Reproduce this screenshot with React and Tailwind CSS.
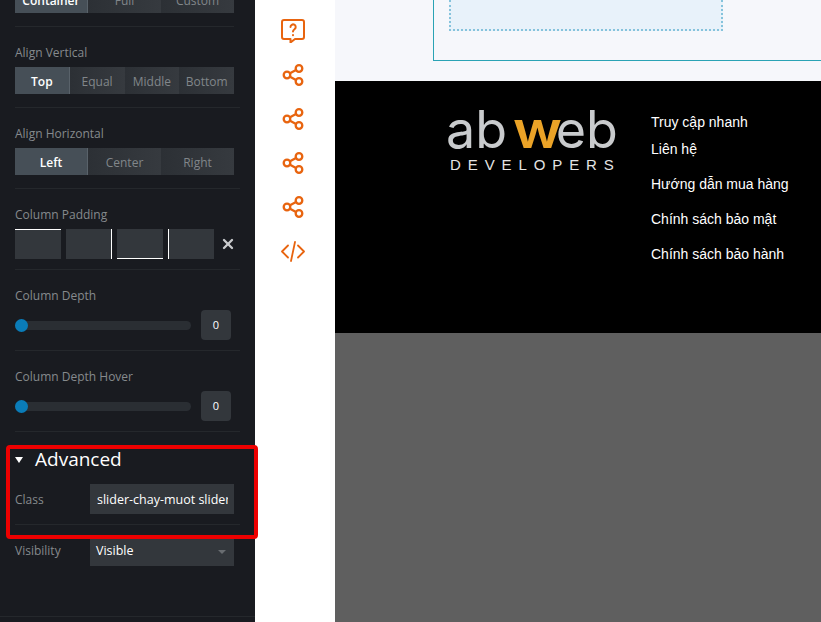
import { X } from "lucide-react";

function Segmented({ items, widths }) {
  return (
    <div className="flex h-[27px] w-[219px] text-[12px] text-[#81868a]">
      {items.map((item, i) => (
        <div
          key={item}
          className={
            widths +
            " flex items-center justify-center pt-[2px] " +
            (i === 0
              ? "bg-[#464f57] border-r border-[#59626a] font-semibold text-white"
              : "bg-gradient-to-r from-[#2c3035] to-[#363a3f]")
          }
        >
          {item}
        </div>
      ))}
    </div>
  );
}

function Section({ label, children }) {
  return (
    <div className="h-[81px] border-b border-[#25282c] pt-[18px]">
      <div className="h-[22px] text-[12px] leading-[16px] text-[#868a8d]">{label}</div>
      {children}
    </div>
  );
}

function DepthSlider() {
  return (
    <div className="flex items-center">
      <div className="h-[9px] w-[176px] rounded-full bg-[#2a2e33]">
        <div className="-mt-[2px] h-[13px] w-[13px] rounded-full bg-[#0a7cb8]" />
      </div>
      <div className="ml-[10px] flex h-[30px] w-[30px] items-center justify-center rounded-[4px] bg-[#33373c] text-[11px] font-medium text-white">
        0
      </div>
    </div>
  );
}

function HelpIcon() {
  return (
    <svg width="24" height="24" viewBox="0 0 24 24" fill="none" stroke="#e8640f" strokeWidth="2" strokeLinejoin="round" strokeLinecap="round">
      <path d="M3 1h18a2 2 0 0 1 2 2v15a2 2 0 0 1-2 2h-7l-4.500 3.500v-3.500H3a2 2 0 0 1-2-2V3a2 2 0 0 1 2-2z" />
      <path d="M9.500 8a2.600 2.600 0 1 1 4 2.200c-1 .7-1.500 1.200-1.500 2.300" />
      <path d="M12 16v.2" />
    </svg>
  );
}

function ShareIcon() {
  return (
    <svg width="24" height="24" viewBox="0 0 24 24" fill="none" stroke="#e8640f" strokeWidth="2.300">
      <circle cx="6" cy="12" r="3.300" />
      <circle cx="18" cy="5.500" r="3.300" />
      <circle cx="18" cy="18.500" r="3.300" />
      <path d="M9 10.300l6-3.200M9 13.700l6 3.200" />
    </svg>
  );
}

function CodeIcon() {
  return (
    <svg width="24" height="24" viewBox="0 0 24 24" fill="none" stroke="#e8640f" strokeWidth="1.800" strokeLinecap="round" strokeLinejoin="round">
      <path d="M7 6.500L1 12.500l6 6" />
      <path d="M17 6.500l6 6-6 6" />
      <path d="M14 3l-4 19" />
    </svg>
  );
}

const footerLinks = ["Liên hệ", "Hướng dẫn mua hàng", "Chính sách bảo mật", "Chính sách bảo hành"];

export default function App() {
  return (
    <div className="relative flex h-[622px] w-[821px] overflow-hidden bg-white font-['Open_Sans',sans-serif]">
      {/* left settings panel */}
      <div className="h-full w-[255px] shrink-0 bg-[#191b20] px-[15px]">
        <div className="-mt-[14px] h-[41px] w-[219px] border-b border-[#25282c]">
          <Segmented items={["Container", "Full", "Custom"]} widths="w-[73px]" />
        </div>
        <Section label="Align Vertical">
          <Segmented items={["Top", "Equal", "Middle", "Bottom"]} widths="w-[55px]" />
        </Section>
        <Section label="Align Horizontal">
          <Segmented items={["Left", "Center", "Right"]} widths="w-[73px]" />
        </Section>
        <Section label="Column Padding">
          <div className="flex h-[30px] items-center gap-[5px]">
            <div className="h-[30px] w-[46px] border-t border-white bg-[#33373c]" />
            <div className="h-[30px] w-[46px] border-r border-white bg-[#33373c]" />
            <div className="h-[30px] w-[46px] border-b border-white bg-[#33373c]" />
            <div className="h-[30px] w-[46px] border-l border-white bg-[#33373c]" />
            <X size={16} strokeWidth={3.5} className="ml-[1px] text-[#c9cbcd]" />
          </div>
        </Section>
        <Section label="Column Depth">
          <DepthSlider />
        </Section>
        <Section label="Column Depth Hover">
          <DepthSlider />
        </Section>

        <div className="mt-[14px] flex h-[27px] items-center">
          <div className="h-0 w-0 border-x-[4px] border-t-[6px] border-x-transparent border-t-white" />
          <span className="ml-[12px] text-[19px] text-white">Advanced</span>
        </div>
        <div className="mt-[11px] flex h-[41px] items-start border-b border-[#25282c]">
          <span className="h-[30px] w-[75px] pt-[1px] text-[12px] leading-[30px] text-[#868a8d]">Class</span>
          <div className="flex h-[30px] w-[144px] items-center bg-[#33373c] pl-[7px] pr-[6px] pt-[2px]">
            <span className="overflow-hidden whitespace-nowrap text-[12.500px] text-white">slider-chay-muot slider</span>
          </div>
        </div>
        <div className="mt-[10px] flex items-center">
          <span className="w-[75px] text-[12px] text-[#868a8d]">Visibility</span>
          <div className="flex h-[31px] w-[144px] items-center justify-between bg-[#33373c] pl-[6px] pr-[8px] pt-[2px] text-[12.500px] text-white">
            Visible
            <div className="h-0 w-0 border-x-[4px] border-t-[4px] border-x-transparent border-t-[#696d71]" />
          </div>
        </div>
        <div className="-mx-[15px] mt-[50px] border-t border-[#25282c]" />
      </div>

      {/* icon rail */}
      <div className="flex w-[80px] shrink-0 flex-col items-center gap-[20px] pr-[4px] pt-[19px]">
        <HelpIcon />
        <ShareIcon />
        <ShareIcon />
        <ShareIcon />
        <ShareIcon />
        <CodeIcon />
      </div>

      {/* page preview */}
      <div className="flex min-w-0 flex-1 flex-col font-['Liberation_Sans',sans-serif]">
        <div className="h-[81px] bg-[#f6f7fb] pl-[98px]">
          <div className="h-[61px] border-b border-l border-[#2aa3b5] pl-[15px]">
            <div className="h-[31px] w-[274px] border-x-[2px] border-b-[2px] border-dotted border-[#86c3dc] bg-[#e8f2fa]" />
          </div>
        </div>
        <div className="flex h-[252px] bg-black pl-[113px]">
          <div className="w-[203px] pt-[25px]">
            <div className="-ml-[2px] flex h-[48px] items-center font-['Inter',sans-serif] text-[52px] font-normal leading-[48px] text-[#c9cbcd]">
              ab<span className="ml-[6px] mr-[-1px] origin-left scale-x-[1.12] font-semibold text-[#eba327]">w</span>eb
            </div>
            <div className="ml-[2px] text-[15px] font-light tracking-[6.900px] whitespace-nowrap text-[#e4e4e4]">DEVELOPERS</div>
          </div>
          <div className="pt-[33px] text-[14px] text-white">
            <div className="h-[20px] leading-[16px]">Truy cập nhanh</div>
            {footerLinks.map((text) => (
              <div key={text} className="h-[35px] pt-[7px] leading-[16px]">
                {text}
              </div>
            ))}
          </div>
        </div>
        <div className="flex-1 bg-[#5f5f5f]" />
      </div>

      {/* red highlight over the Advanced block */}
      <div className="absolute left-[6px] top-[445px] h-[94px] w-[252px] rounded-[4px] border-[4px] border-[#ee0000]" />
    </div>
  );
}
